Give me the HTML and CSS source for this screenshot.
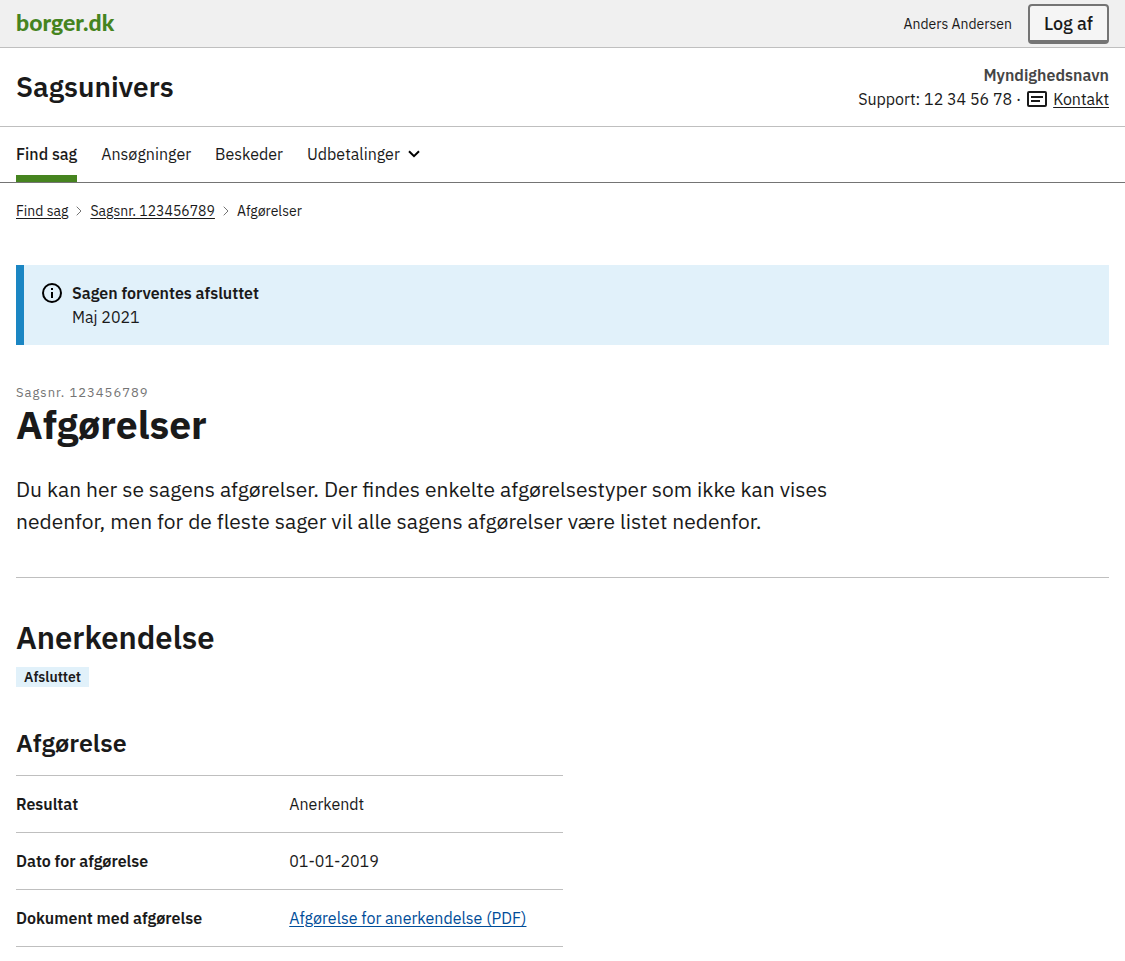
FILE: index.html
```html
<!DOCTYPE html>
<html lang="da">
<head>
<meta charset="utf-8">
<meta name="viewport" content="width=device-width, initial-scale=1">
<title>Afgørelser – Sagsunivers</title>
<link rel="stylesheet" href="styles.css">
</head>
<body>
<header>
  <div class="portal-bar">
    <a class="logo" href="#">borger.dk</a>
    <div class="user">
      <span class="user-name">Anders Andersen</span>
      <button class="logout" type="button">Log af</button>
    </div>
  </div>
  <div class="solution-bar">
    <span class="solution-name">Sagsunivers</span>
    <div class="authority">
      <strong class="authority-name">Myndighedsnavn</strong>
      <div class="support">
        <span>Support: 12 34 56 78 ·</span>
        <svg class="contact-icon" viewBox="0 0 20 16" aria-hidden="true"><rect x="1" y="1" width="18" height="14" rx="1"/><path d="M4 6h12M4 10h9"/></svg>
        <a href="#">Kontakt</a>
      </div>
    </div>
  </div>
  <nav class="main-nav" aria-label="Hovedmenu">
    <a class="nav-item nav-current" href="#" aria-current="page">Find sag</a>
    <a class="nav-item" href="#">Ansøgninger</a>
    <a class="nav-item" href="#">Beskeder</a>
    <button class="nav-item" type="button">Udbetalinger
      <svg class="chevron" viewBox="0 0 12 8" aria-hidden="true"><path d="M1 1.2l5 5 5-5"/></svg>
    </button>
  </nav>
</header>
<nav class="breadcrumb" aria-label="Brødkrumme">
  <a href="#">Find sag</a>
  <svg class="separator" viewBox="0 0 6 10" aria-hidden="true"><path d="M.7.7L5 5 .7 9.3"/></svg>
  <a href="#">Sagsnr. 123456789</a>
  <svg class="separator" viewBox="0 0 6 10" aria-hidden="true"><path d="M.7.7L5 5 .7 9.3"/></svg>
  <span>Afgørelser</span>
</nav>
<main>
  <section class="alert">
    <svg class="info-icon" viewBox="0 0 20 20" aria-hidden="true"><circle cx="10" cy="10" r="9"/><path d="M10 9v6M10 5v2"/></svg>
    <div>
      <strong>Sagen forventes afsluttet</strong>
      <p>Maj 2021</p>
    </div>
  </section>
  <p class="case-number">Sagsnr. 123456789</p>
  <h1>Afgørelser</h1>
  <p class="lead">Du kan her se sagens afgørelser. Der findes enkelte afgørelsestyper som ikke kan vises nedenfor, men for de fleste sager vil alle sagens afgørelser være listet nedenfor.</p>
  <hr>
  <h2>Anerkendelse</h2>
  <span class="badge">Afsluttet</span>
  <h3 id="decision">Afgørelse</h3>
  <table class="details" aria-labelledby="decision">
    <tbody>
      <tr><th scope="row">Resultat</th><td>Anerkendt</td></tr>
      <tr><th scope="row">Dato for afgørelse</th><td>01-01-2019</td></tr>
      <tr><th scope="row">Dokument med afgørelse</th><td><a href="#">Afgørelse for anerkendelse (PDF)</a></td></tr>
    </tbody>
  </table>
</main>
</body>
</html>
```
FILE: styles.css
```css
* { box-sizing: border-box; }
body {
  margin: 0;
  background: #fff;
  color: #1a1a1a;
  font: 400 16px/24px "IBM Plex Sans", "Noto Sans", sans-serif;
}
p, h1, h2, h3 { margin: 0; }
a { color: inherit; text-underline-offset: 2px; }
button { font: inherit; color: inherit; cursor: pointer; }
svg { fill: none; stroke: currentColor; flex: none; }
strong, h2, h3, th { font-weight: 600; }

.portal-bar, .solution-bar {
  display: flex;
  align-items: center;
  justify-content: space-between;
  padding: 0 16px;
  border-bottom: 1px solid #bfbfbf;
}
.portal-bar { min-height: 48px; background: #f0f0f0; }
.logo {
  padding-bottom: 3px;
  color: #46841f;
  font: 900 23px/28px Lato, sans-serif;
  text-decoration: none;
}
.user { display: flex; align-items: center; gap: 16px; }
.user-name { font-size: 14px; }
.logout {
  height: 40px;
  padding: 2px 14px 0;
  border: 2px solid #747474;
  border-bottom-width: 4px;
  border-radius: 4px;
  background: #f5f5f5;
  font-size: 18px;
  font-weight: 500;
}
.solution-bar { padding: 15px 16px; }
.solution-name { font-size: 28px; line-height: 32px; font-weight: 600; }
.authority { text-align: right; }
.authority-name { color: #454545; }
.support { display: flex; align-items: center; gap: 6px; }
.contact-icon { width: 20px; height: 16px; stroke-width: 2; }

.main-nav {
  display: flex;
  gap: 24px;
  padding: 0 16px;
  border-bottom: 1px solid #747474;
}
.nav-item {
  display: flex;
  align-items: center;
  gap: 8px;
  padding: 15px 0 9px;
  border: 0;
  border-bottom: 7px solid transparent;
  background: none;
  text-decoration: none;
}
.nav-current { border-bottom-color: #46841f; font-weight: 500; }
.chevron { width: 12px; height: 8px; stroke: #000; stroke-width: 2; }

.breadcrumb {
  display: flex;
  align-items: center;
  gap: 8px;
  padding: 16px;
  font-size: 14px;
}
.separator { width: 6px; height: 10px; stroke: #747474; }

main { padding: 26px 16px 14px; }
.alert {
  display: flex;
  gap: 10px;
  padding: 16px 18px;
  border-left: 8px solid #1b86c3;
  background: #e1f1fa;
}
.info-icon { width: 20px; height: 20px; margin-top: 2px; stroke: #000; stroke-width: 2; }
.case-number {
  margin-top: 40px;
  color: #747474;
  font-size: 13px;
  line-height: 16px;
  letter-spacing: 1px;
}
h1 { font-size: 39px; line-height: 48px; font-weight: 700; }
.lead {
  max-width: 820px;
  margin-top: 24px;
  font-size: 21px;
  line-height: 32px;
}
hr { margin: 40px 0; border: 0; border-top: 1px solid #bfbfbf; }
h2 { font-size: 31px; line-height: 40px; }
.badge {
  display: table;
  margin-top: 9px;
  padding: 0 8px;
  background: #e1f1fa;
  font-size: 14px;
  line-height: 20px;
  font-weight: 600;
}
h3 { margin-top: 40px; font-size: 25px; line-height: 32px; }
.details {
  width: 50%;
  margin-top: 16px;
  border-collapse: collapse;
  table-layout: fixed;
}
.details tr { border-top: 1px solid #bfbfbf; border-bottom: 1px solid #bfbfbf; }
.details th, .details td { width: 50%; padding: 16px 0; text-align: left; }
.details a { color: #004d99; }
```
